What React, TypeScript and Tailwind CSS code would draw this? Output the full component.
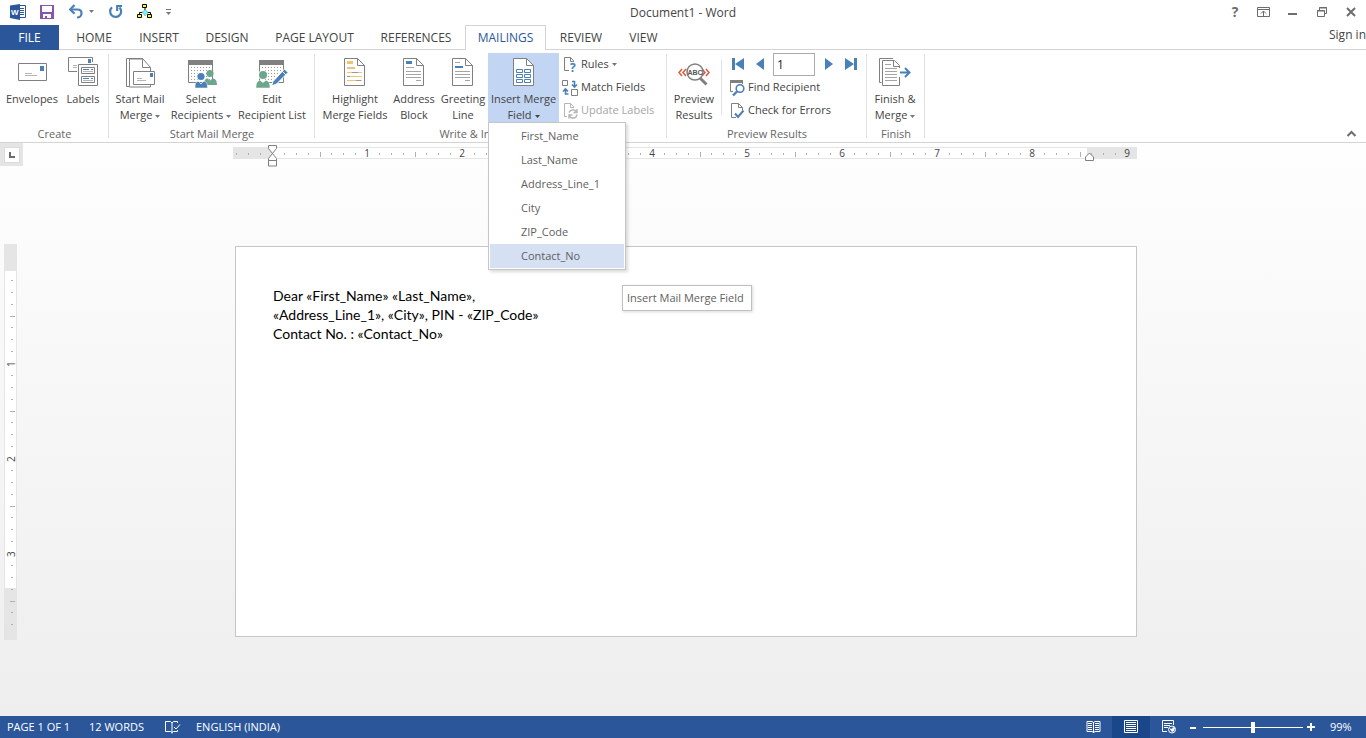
import type { ReactNode } from 'react'

const tabs = [
  { label: 'HOME', width: 'w-16 ml-[3px]' },
  { label: 'INSERT', width: 'w-[66px]' },
  { label: 'DESIGN', width: 'w-[70px]' },
  { label: 'PAGE LAYOUT', width: 'w-[105px]' },
  { label: 'REFERENCES', width: 'w-[98px]' },
  { label: 'MAILINGS', width: 'w-[81px]', active: true },
  { label: 'REVIEW', width: 'w-[70px]' },
  { label: 'VIEW', width: 'w-[55px]' },
]

const mergeFields = ['First_Name', 'Last_Name', 'Address_Line_1', 'City', 'ZIP_Code', 'Contact_No']

function Icon({ size = 32, children }: { size?: number; children: ReactNode }) {
  return (
    <svg width={size} height={size} viewBox={`0 0 ${size} ${size}`} fill="none" className="shrink-0 overflow-visible" aria-hidden="true">
      {children}
    </svg>
  )
}

function Caret({ className = 'text-[#777]' }: { className?: string }) {
  return (
    <svg width="5" height="3" viewBox="0 0 5 3" className={`inline-block align-middle ${className}`} aria-hidden="true">
      <path d="M0 0h5L2.5 3z" fill="currentColor" />
    </svg>
  )
}

/* Quick access icons */

function WordIcon() {
  return (
    <Icon size={16}>
      <path d="M8.500 1.500h7v12h-7" fill="#fff" stroke="#2b579a" />
      <path d="M10 4.500h4M10 6.500h4M10 8.500h4M10 10.500h4" stroke="#2b579a" />
      <path d="M0 1.500L10 0v16L0 14z" fill="#2b579a" />
      <text x="1" y="11" fill="#fff" fontSize="8" fontWeight="700" fontFamily="Liberation Sans, sans-serif">W</text>
    </Icon>
  )
}

function SaveIcon() {
  return (
    <Icon size={16}>
      <path d="M1 1h14v14H1z" fill="#8855a8" />
      <path d="M3 2h10v6H3zM4 10h8v4H8v-2H6v2H4z" fill="#fff" />
    </Icon>
  )
}

function UndoIcon() {
  return (
    <Icon size={16}>
      <path d="M2 5.500h7.500c2.500 0 4 1.500 4 3.700s-1.600 4.300-4.500 4.300" stroke="#4a80b8" strokeWidth="2.200" />
      <path d="M6.500 1L2.200 5.500l4.300 4.300" stroke="#4a80b8" strokeWidth="2.200" />
    </Icon>
  )
}

function RepeatIcon() {
  return (
    <Icon size={16}>
      <path d="M4 3.300A5.500 5.500 0 1 0 11.500 3.500" stroke="#4a80b8" strokeWidth="2.200" />
      <path d="M14 2H9.200v5" stroke="#4a80b8" strokeWidth="2.200" />
    </Icon>
  )
}

function TreeIcon() {
  return (
    <Icon size={16}>
      <path d="M8 3v3M2.500 11V8.500h3M13.500 11V8.500h-3" stroke="#000" />
      <path d="M5.500 .5h4v3h-4zM.5 10.500h4v3h-4zM10.500 10.500h4v3h-4z" fill="#ff0" stroke="#000" />
      <path d="M8 5.500l3 3-3 3-3-3z" fill="#6ff" stroke="#666" strokeDasharray="1 1" />
    </Icon>
  )
}

/* Large ribbon icons */

function EnvelopeIcon() {
  return (
    <Icon>
      <path d="M2.500 7.500h28v17h-28z" fill="#fff" stroke="#808080" />
      <path d="M24 10h4v5h-4z" fill="#4a80b8" />
      <path d="M9 17.500h7M9 19.500h12" stroke="#b5b5b5" />
    </Icon>
  )
}

function LabelsIcon() {
  return (
    <Icon>
      <path d="M10 15.500H1.500v-14h24V6" stroke="#808080" />
      <path d="M21 3h3v4h-3z" fill="#4a80b8" />
      <path d="M6 9.500h4M6 11.500h4" stroke="#b5b5b5" />
      <path d="M11.500 8.500h19v21h-19z" fill="#fff" stroke="#808080" />
      <path d="M14.500 11.500h13v6h-13zM14.500 20.500h13v6h-13z" stroke="#808080" />
      <path d="M16 13.500h6M24 13.500h2M16 22.500h6M24 22.500h2" stroke="#4a80b8" />
      <path d="M16 15.500h10M16 24.500h10" stroke="#b5b5b5" />
    </Icon>
  )
}

function StartMergeIcon() {
  return (
    <Icon>
      <path d="M19 2.500H2.500v28h3" stroke="#808080" />
      <path d="M5.500 5.500V31h21V11.500l-7.500-8.500H5.500z" fill="#fff" stroke="#808080" />
      <path d="M18.500 3.500v8h8" stroke="#808080" />
      <path d="M9.500 15.500h21v13h-21z" fill="#fff" stroke="#808080" />
      <path d="M26 17h3v4h-3z" fill="#4a80b8" />
      <path d="M13 22.500h5M13 24.500h9" stroke="#b5b5b5" />
    </Icon>
  )
}

function Table() {
  return (
    <>
      <path d="M3.500 8.500h24v18h-24z" fill="#fff" stroke="#808080" />
      <path d="M3 4h25v5H3z" fill="#808080" />
      <path
        d="M6 11.500h20M6 14.500h20M6 17.500h20M6 20.500h20M6 23.500h20"
        stroke="#999"
        strokeDasharray="1 2"
      />
    </>
  )
}

function RecipientsIcon() {
  return (
    <Icon>
      <Table />
      <circle cx="25" cy="17.500" r="3.600" fill="#6da68c" />
      <path d="M19 29c0-5 1.500-6.500 3.500-6.500l2.500 2 2.500-2c2.500 0 4.500 1.500 4.500 6.500z" fill="#6da68c" />
      <circle cx="16" cy="20.500" r="4.500" fill="#fff" />
      <circle cx="16" cy="20.500" r="3.600" fill="#4a80b8" />
      <path d="M10 32c0-5 1-6.500 3.500-6.500l2.500 2.500 2.500-2.500c3 0 4 1.500 4 6.500z" fill="#4a80b8" stroke="#fff" strokeWidth=".5" />
    </Icon>
  )
}

function EditListIcon() {
  return (
    <Icon>
      <Table />
      <circle cx="7" cy="19" r="5" fill="#fff" />
      <circle cx="7" cy="19" r="4" fill="#6da68c" />
      <path d="M0 32c0-5.500 1.500-7.500 4.500-7.500l2.500 2.500 2.500-2.500c3 0 4.500 2 4.500 7.500z" fill="#6da68c" stroke="#fff" strokeWidth=".5" />
      <path d="M15.500 30l1.500-4.500L28.500 13l3.500 3.500L20.500 28z" fill="#4a80b8" stroke="#fff" />
      <path d="M26 15l4 4" stroke="#fff" />
    </Icon>
  )
}

function Page({ children }: { children: ReactNode }) {
  return (
    <Icon>
      <path d="M5.500 2.500h13l7 7v20h-20z" fill="#fff" stroke="#808080" />
      <path d="M18.500 2.500v7h7" stroke="#808080" />
      {children}
    </Icon>
  )
}

function HighlightIcon() {
  return (
    <Page>
      <path d="M8 5h6v3H8zM8 11h8v2H8z" fill="#ecc474" />
      <path d="M8 16.500h15M8 20.500h15M8 24.500h15" stroke="#ecc474" />
      <path d="M13 16.500h6M8 20.500h3M17 24.500h5" stroke="#999" />
    </Page>
  )
}

function AddressIcon() {
  return (
    <Page>
      <path d="M8 5h6v3H8z" fill="#4a80b8" />
      <path d="M8 11.500h8M8 15.500h15M8 18.500h15M8 21.500h15M18 24.500h5" stroke="#a5a5a5" />
    </Page>
  )
}

function GreetingIcon() {
  return (
    <Page>
      <path d="M8 10h8v2H8z" fill="#4a80b8" />
      <path d="M8 6.500h5M8 15.500h15M8 18.500h15M8 21.500h15M18 24.500h5" stroke="#a5a5a5" />
    </Page>
  )
}

function InsertFieldIcon() {
  return (
    <Page>
      <path
        d="M8.500 13.500h6v3h-6zM16.500 13.500h6v3h-6zM8.500 18.500h6v3h-6zM16.500 18.500h6v3h-6zM8.500 23.500h6v3h-6zM16.500 23.500h6v3h-6z"
        stroke="#4a80b8"
      />
    </Page>
  )
}

function PreviewIcon() {
  return (
    <Icon>
      <path d="M4 13l-3 3.500L4 20M8 13l-3 3.500L8 20M24 13l3 3.500-3 3.500M28 13l3 3.500-3 3.500" stroke="#dc5a3c" strokeWidth="1.500" />
      <path d="M22 22l6.500 6.500" stroke="#808080" strokeWidth="3" />
      <circle cx="17" cy="16" r="8" fill="#fff" stroke="#808080" strokeWidth="1.500" />
      <text x="17" y="18.500" textAnchor="middle" fontSize="7" fontWeight="700" fill="#555" fontFamily="Liberation Sans, sans-serif">ABC</text>
    </Icon>
  )
}

function FinishIcon() {
  return (
    <Icon>
      <path d="M14 2.500H.5v24h2" stroke="#808080" />
      <path d="M3.500 4.500h12l5 5v20h-17z" fill="#fff" stroke="#808080" />
      <path d="M14.500 4.500v6h6" stroke="#808080" />
      <path d="M6 8.500h6M6 12.500h12M6 15.500h12M6 18.500h12M6 21.500h12M6 24.500h12" stroke="#a5a5a5" />
      <path d="M19 12h5v9h-5z" fill="#fff" />
      <path d="M21 16.500h9M26 12l4.500 4.500L26 21" stroke="#4a80b8" strokeWidth="2" />
    </Icon>
  )
}

/* Small ribbon icons */

function RulesIcon() {
  return (
    <Icon size={16}>
      <path d="M7 13.500H2.500V.5h6l3 3V5M8.500 .5v4h3" stroke="#808080" />
      <text x="8" y="15" fontSize="12" fontWeight="700" fill="#4a80b8">?</text>
    </Icon>
  )
}

function MatchIcon() {
  return (
    <Icon size={16}>
      <path d="M.5 .5h5v5h-5zM9.500 9.500h6v6h-6z" stroke="#808080" />
      <path d="M10 1.500h2.500v5M10 4.500l2.500 2.500L15 4.500M6.500 14H3.500V9M1 11.500L3.500 9 6 11.500" stroke="#4a80b8" strokeWidth="1.600" />
    </Icon>
  )
}

function UpdateIcon() {
  return (
    <Icon size={16}>
      <path d="M5 13.500H2.500V.5h6l3 3V5M8.500 .5v4h3" stroke="#b5b5b5" />
      <path d="M7 9.500a4 4 0 0 1 7-1M15 6v3.500h-3.500M15 11.500a4 4 0 0 1-7.500 1.500M7 15.500V12h3.500" stroke="#b5b5b5" strokeWidth="1.500" />
    </Icon>
  )
}

function FindIcon() {
  return (
    <Icon size={16}>
      <path d="M4 11.500H1.500V1M13.500 1v3" stroke="#808080" />
      <path d="M1 0h13v3H1z" fill="#808080" />
      <circle cx="11" cy="8.500" r="3.800" fill="#fff" stroke="#4a80b8" strokeWidth="1.600" />
      <path d="M8 11.500l-4 4" stroke="#4a80b8" strokeWidth="2.400" />
    </Icon>
  )
}

function CheckIcon() {
  return (
    <Icon size={16}>
      <path d="M7 14.500H2.500V.5h7l4 4V7M9.500 .5v4h4" stroke="#808080" />
      <path d="M6 10.500l3 3.500 5.500-6.500" stroke="#4a80b8" strokeWidth="2" />
    </Icon>
  )
}

function BigButton({ icon, lines, caret, width, active }: {
  icon: ReactNode
  lines: string[]
  caret?: boolean
  width: string
  active?: boolean
}) {
  return (
    <button
      type="button"
      className={`flex h-[69px] flex-col items-center gap-[3px] pt-[3px] whitespace-nowrap ${width} ${active ? 'bg-[#c2d5f2]' : ''}`}
    >
      {icon}
      <span className="flex flex-col items-center leading-4">
        {lines.map((line, i) => (
          <span key={line}>
            {line}
            {caret && i === lines.length - 1 && <Caret className={active ? 'ml-[3px] text-[#444]' : 'ml-[3px] text-[#777]'} />}
          </span>
        ))}
      </span>
    </button>
  )
}

function SmallButton({ icon, label, caret, disabled }: {
  icon: ReactNode
  label: string
  caret?: boolean
  disabled?: boolean
}) {
  return (
    <button type="button" disabled={disabled} className="flex h-[23px] items-center gap-[3px] whitespace-nowrap disabled:text-[#a6a6a6]">
      {icon}
      <span>{label}</span>
      {caret && <Caret />}
    </button>
  )
}

function Group({ title, width, children }: { title: string; width: string; children: ReactNode }) {
  return (
    <section aria-label={title} className={`relative flex shrink-0 flex-col pt-[3px] ${width}`}>
      <div className="flex h-[69px]">{children}</div>
      <h2 className="pt-1 text-center leading-4 whitespace-nowrap text-[#666]">{title}</h2>
      <span className="absolute top-1 right-0 h-[84px] w-px bg-[#e1e1e1]" />
    </section>
  )
}

function TitleBar() {
  return (
    <header className="grid h-[25px] grid-cols-[1fr_auto_1fr] items-center">
      <div className="flex items-center pb-[2px] pl-[10px]">
        <WordIcon />
        <button type="button" aria-label="Save" className="ml-[13px]"><SaveIcon /></button>
        <button type="button" aria-label="Undo" className="ml-[13px] flex items-center gap-[5px]"><UndoIcon /><Caret /></button>
        <button type="button" aria-label="Repeat" className="ml-[14px]"><RepeatIcon /></button>
        <button type="button" aria-label="Diagram" className="ml-[13px]"><TreeIcon /></button>
        <button type="button" aria-label="Customize" className="ml-[13px] flex flex-col items-center gap-[2px]">
          <span className="h-px w-[5px] bg-[#777]" />
          <Caret />
        </button>
      </div>
      <h1>Document1 - Word</h1>
      <div className="flex items-center justify-end gap-[13px] pr-[7px] pb-[2px] text-[#6d6d6d]">
        <button type="button" aria-label="Help" className="w-4 text-sm leading-4 font-bold">?</button>
        <button type="button" aria-label="Ribbon display options">
          <Icon size={16}>
            <path d="M1.500 3.500h12v9h-12zM1 5.500h13M7.500 12V7M5 9.500L7.500 7 10 9.500" stroke="currentColor" />
          </Icon>
        </button>
        <button type="button" aria-label="Minimize">
          <Icon size={16}><path d="M3 10h9" stroke="currentColor" strokeWidth="2" /></Icon>
        </button>
        <button type="button" aria-label="Restore">
          <Icon size={16}>
            <path d="M3.500 6.500h7v6h-7zM3 7h8M5.500 6V3.500h7v6H11M5 4h8" stroke="currentColor" />
          </Icon>
        </button>
        <button type="button" aria-label="Close">
          <Icon size={16}><path d="M4 4l8 8M12 4l-8 8" stroke="currentColor" strokeWidth="2" /></Icon>
        </button>
      </div>
    </header>
  )
}

function TabBar() {
  return (
    <nav aria-label="Ribbon tabs" className="flex h-[25px] border-b border-[#d4d4d4]">
      <button type="button" className="h-[25px] w-[59px] bg-[#2b579a] text-white">FILE</button>
      {tabs.map((tab) => (
        <button
          key={tab.label}
          type="button"
          className={`h-[25px] whitespace-nowrap ${tab.width} ${tab.active ? 'border border-b-0 border-[#d4d4d4] bg-white text-[#2b579a]' : ''}`}
        >
          {tab.label}
        </button>
      ))}
      <a href="#signin" className="ml-auto h-5 leading-5 whitespace-nowrap">Sign in</a>
    </nav>
  )
}

function MergeFieldMenu() {
  return (
    <div role="menu" className="absolute top-[69px] left-0 z-10 w-[138px] border border-[#c6c6c6] bg-white p-px shadow-[2px_2px_3px_rgba(0,0,0,0.15)]">
      {mergeFields.map((field) => (
        <button
          key={field}
          type="button"
          role="menuitem"
          className={`block h-6 w-full pl-[31px] text-left text-[#5f5f5f] ${field === 'Contact_No' ? 'bg-[#d5e1f2]' : ''}`}
        >
          {field}
        </button>
      ))}
    </div>
  )
}

function RecordNavigator() {
  return (
    <div className="flex h-[23px] items-center text-[#4a80b8]">
      <button type="button" aria-label="First record" className="ml-[1px]">
        <Icon size={16}><path d="M2 1h3v12H2zM14 1v12L5 7z" fill="currentColor" /></Icon>
      </button>
      <button type="button" aria-label="Previous record" className="ml-[7px]">
        <Icon size={16}><path d="M11 1v12L3 7z" fill="currentColor" /></Icon>
      </button>
      <input
        type="text"
        aria-label="Record number"
        defaultValue="1"
        className="ml-1 h-[23px] w-[42px] border border-[#ababab] px-[3px] text-xs text-[#222] outline-none"
      />
      <button type="button" aria-label="Next record" className="ml-2">
        <Icon size={16}><path d="M2 1v12l8-6z" fill="currentColor" /></Icon>
      </button>
      <button type="button" aria-label="Last record" className="ml-[5px]">
        <Icon size={16}><path d="M1 1v12l9-6zM10 1h3v12h-3z" fill="currentColor" /></Icon>
      </button>
    </div>
  )
}

function Ribbon() {
  return (
    <div className="flex h-[93px] border-b border-[#d4d4d4] text-[11px]">
      <Group title="Create" width="w-[109px]">
        <BigButton icon={<EnvelopeIcon />} lines={['Envelopes']} width="ml-[2px] w-[60px]" />
        <BigButton icon={<LabelsIcon />} lines={['Labels']} width="w-[42px]" />
      </Group>
      <Group title="Start Mail Merge" width="w-[206px]">
        <BigButton icon={<StartMergeIcon />} lines={['Start Mail', 'Merge']} caret width="ml-[2px] w-[58px]" />
        <BigButton icon={<RecipientsIcon />} lines={['Select', 'Recipients']} caret width="w-[64px]" />
        <BigButton icon={<EditListIcon />} lines={['Edit', 'Recipient List']} width="w-[78px]" />
      </Group>
      <Group title="Write & Insert Fields" width="w-[352px]">
        <BigButton icon={<HighlightIcon />} lines={['Highlight', 'Merge Fields']} width="w-20" />
        <BigButton icon={<AddressIcon />} lines={['Address', 'Block']} width="w-[38px]" />
        <BigButton icon={<GreetingIcon />} lines={['Greeting', 'Line']} width="ml-[5px] w-[50px]" />
        <div className="relative">
          <BigButton icon={<InsertFieldIcon />} lines={['Insert Merge', 'Field']} caret width="w-[71px]" active />
          <MergeFieldMenu />
        </div>
        <div className="ml-[3px] flex flex-col items-start">
          <SmallButton icon={<RulesIcon />} label="Rules" caret />
          <SmallButton icon={<MatchIcon />} label="Match Fields" />
          <SmallButton icon={<UpdateIcon />} label="Update Labels" disabled />
        </div>
      </Group>
      <Group title="Preview Results" width="w-[200px]">
        <BigButton icon={<PreviewIcon />} lines={['Preview', 'Results']} width="w-[54px]" />
        <span className="mt-[7px] h-[55px] w-px bg-[#e1e1e1]" />
        <div className="ml-[7px] flex flex-col items-start">
          <RecordNavigator />
          <SmallButton icon={<FindIcon />} label="Find Recipient" />
          <SmallButton icon={<CheckIcon />} label="Check for Errors" />
        </div>
      </Group>
      <Group title="Finish" width="w-[58px]">
        <BigButton icon={<FinishIcon />} lines={['Finish &', 'Merge']} caret width="w-14" />
      </Group>
      <button type="button" aria-label="Collapse the ribbon" className="mr-[7px] ml-auto self-end text-[#6d6d6d]">
        <Icon size={16}><path d="M4.500 10l4-4 4 4" stroke="currentColor" strokeWidth="2" /></Icon>
      </button>
    </div>
  )
}

const INCH = 95

function HorizontalRuler() {
  const eighths = Array.from({ length: 76 }, (_, i) => i - 3)
  return (
    <svg width="904" height="22" viewBox="0 0 904 22" className="block overflow-visible" aria-hidden="true">
      <path d="M0 0h904v12H0z" fill="#e5e5e5" />
      <path d="M39 1h815v10H39z" fill="#fff" />
      {eighths.map((n) => {
        const x = Math.round(39 + (n * INCH) / 8)
        if (n === 0) return null
        if (n % 8 === 0) {
          return (
            <text key={n} x={x} y="10" textAnchor="middle" fontSize="10" fontWeight="500" fill="#444">
              {n / 8}
            </text>
          )
        }
        const tall = n % 4 === 0
        return <rect key={n} x={x} y={tall ? 5 : 6} width="1" height={tall ? 5 : 2} fill="#b0b0b0" />
      })}
      <path d="M35.500 -1.500h8v3l-4 5 4 5v7.500h-8v-7.500l4-5-4-5zM35.500 13.500h8" fill="#fff" stroke="#808080" />
      <path d="M852.500 13.500v-3.500l4-4 4 4v3.500z" fill="#fff" stroke="#808080" />
    </svg>
  )
}

function VerticalRuler() {
  const eighths = Array.from({ length: 30 }, (_, i) => i + 1)
  return (
    <svg width="13" height="396" viewBox="0 0 13 396" className="block" aria-hidden="true">
      <path d="M0 0h13v396H0z" fill="#e5e5e5" />
      <path d="M1 27h11v317H1z" fill="#fff" />
      {eighths.map((n) => {
        const y = Math.round(24 + (n * INCH) / 8)
        if (n % 8 === 0) {
          return (
            <text key={n} transform={`rotate(-90 11 ${y + 4})`} x="11" y={y + 4} fontSize="10" fontWeight="500" fill="#444">
              {n / 8}
            </text>
          )
        }
        const wide = n % 4 === 0
        return <rect key={n} x={wide ? 6 : 7} y={y} width={wide ? 5 : 2} height="1" fill="#b0b0b0" />
      })}
    </svg>
  )
}

function Workspace() {
  return (
    <main className="relative flex flex-1 bg-linear-to-b from-[#fefefe] to-[#eeeeee]">
      <div className="w-6 shrink-0">
        <button type="button" aria-label="Tab selector" className="flex size-[23px] items-center justify-center bg-[#e5e5e5]">
          <span className="flex size-4 items-center justify-center border border-[#dcdcdc] bg-white">
            <span className="size-[6px] border-b-2 border-l-2 border-[#6d6d6d]" />
          </span>
        </button>
        <div className="mt-[78px] ml-1">
          <VerticalRuler />
        </div>
      </div>
      <div className="flex flex-1 justify-center pr-5">
        <div className="w-[904px] pt-1">
          <HorizontalRuler />
          <article className="mt-[77px] ml-[2px] h-[391px] border border-[#c6c6c6] bg-white pt-[39px] pl-[37px] font-['Lato','Noto_Sans',sans-serif] text-sm leading-[19px] text-black">
            <p>Dear «First_Name» «Last_Name»,</p>
            <p>«Address_Line_1», «City», PIN - «ZIP_Code»</p>
            <p>Contact No. : «Contact_No»</p>
          </article>
        </div>
      </div>
      <div role="tooltip" className="absolute top-[142px] left-[622px] h-[26px] w-[130px] border border-[#c0c0c0] bg-white px-1 text-[11px] leading-6 whitespace-nowrap text-[#5f5f5f] shadow-[1px_1px_3px_rgba(0,0,0,0.15)]">
        Insert Mail Merge Field
      </div>
    </main>
  )
}

function StatusBar() {
  return (
    <footer className="flex h-[22px] items-center bg-[#2b579a] pl-[7px] text-[11px] whitespace-nowrap text-white">
      <span className="w-[82px]">PAGE 1 OF 1</span>
      <span className="w-[75px]">12 WORDS</span>
      <button type="button" aria-label="Proofing">
        <Icon size={16}>
          <path d="M8 13.500L6.500 12.500H1.500v-10h5L8 4v10.500M8 4l1.500-1.500h4V4M10 8l2 2 4-4.500M8 13.500l1.500-1h4V11" stroke="#fff" />
        </Icon>
      </button>
      <span className="ml-4">ENGLISH (INDIA)</span>
      <div className="ml-auto flex h-full items-center">
        <button type="button" aria-label="Read mode" className="flex h-full w-[38px] items-center justify-center">
          <Icon size={16}>
            <path d="M2 2.500h5l1.500 1L10 2.500h5v10h-5l-1.500 1-1.500-1H2zM8.500 3v11M3 4.500h4M3 6.500h4M3 8.500h4M3 10.500h4M10 4.500h4M10 6.500h4M10 8.500h4M10 10.500h4" stroke="#fff" />
          </Icon>
        </button>
        <button type="button" aria-label="Print layout" className="flex h-full w-[38px] items-center justify-center bg-[#19478a]">
          <Icon size={16}>
            <path d="M1.500 1.500h13v12h-13zM3 3.500h10M3 5.500h10M3 7.500h10M3 9.500h10M3 11.500h10" stroke="#fff" />
          </Icon>
        </button>
        <button type="button" aria-label="Web layout" className="flex h-full w-[38px] items-center justify-center">
          <Icon size={16}>
            <path d="M6 12.500H1.500v-11h11V6M3 4.500h8M3 6.500h6M3 8.500h4" stroke="#fff" />
            <circle cx="11" cy="10.500" r="3.500" fill="#2b579a" stroke="#fff" />
            <path d="M8 9l3 1 1-2 2 1-1 3-2 1" fill="#fff" />
          </Icon>
        </button>
        <button type="button" aria-label="Zoom out">
          <Icon size={11}><path d="M2 6h6" stroke="#fff" strokeWidth="2" /></Icon>
        </button>
        <input
          type="range"
          aria-label="Zoom"
          min="0"
          max="200"
          defaultValue="99"
          className="mx-1 h-[11px] w-[100px] appearance-none bg-transparent [&::-webkit-slider-runnable-track]:h-px [&::-webkit-slider-runnable-track]:bg-white [&::-webkit-slider-thumb]:-mt-[5px] [&::-webkit-slider-thumb]:h-[11px] [&::-webkit-slider-thumb]:w-1 [&::-webkit-slider-thumb]:appearance-none [&::-webkit-slider-thumb]:bg-white"
        />
        <button type="button" aria-label="Zoom in">
          <Icon size={12}><path d="M0 6h8M4 2v8" stroke="#fff" strokeWidth="2" /></Icon>
        </button>
        <span className="ml-[11px] w-9">99%</span>
      </div>
    </footer>
  )
}

export default function App() {
  return (
    <div className="flex min-h-screen flex-col overflow-x-hidden bg-white font-['Open_Sans','Noto_Sans',sans-serif] text-xs text-[#444]">
      <TitleBar />
      <TabBar />
      <Ribbon />
      <Workspace />
      <StatusBar />
    </div>
  )
}
